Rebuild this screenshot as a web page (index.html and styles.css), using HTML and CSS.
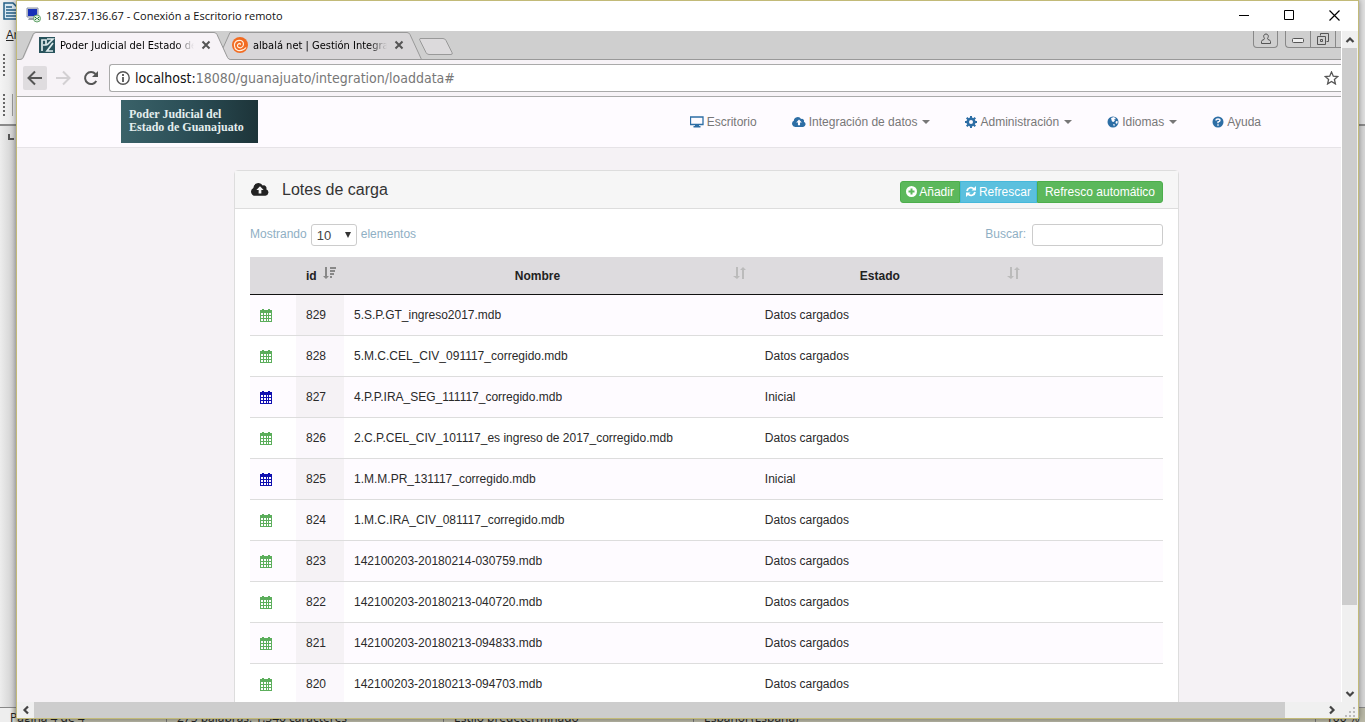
FILE: index.html
```html
<!DOCTYPE html>
<html lang="es">
<head>
<meta charset="utf-8">
<title>187.237.136.67 - Conexión a Escritorio remoto</title>
<link rel="stylesheet" href="styles.css">
</head>
<body>
<svg class="sprite" aria-hidden="true">
  <symbol id="cloud" viewBox="0 0 20 16"><path fill="currentColor" fill-rule="evenodd" d="M4.8 15A4.6 4.6 0 0 1 2.6 6.3 5.6 5.6 0 0 1 13 3.6a3.1 3.1 0 0 1 4 4.1A3.8 3.8 0 0 1 16 15zM8.5 12.5h3V8.6H14L10 4.5 6 8.6h2.500z"/></symbol>
  <symbol id="calendar" viewBox="0 0 12 13"><path fill="currentColor" fill-rule="evenodd" d="M0 1h2V0h2v1h4V0h2v1h2v12H0zM1 4v2h2V4zM4 4v2h2V4zM7 4v2h1V4zM9 4v2h2V4zM1 7v2h2V7zM4 7v2h2V7zM7 7v2h1V7zM9 7v2h2V7zM1 10v2h2v-2zM4 10v2h2v-2zM7 10v2h1v-2zM9 10v2h2v-2z"/></symbol>
  <symbol id="close" viewBox="0 0 10 10"><path d="M1.500 1.500l7 7M8.500 1.500l-7 7" stroke="#555" stroke-width="2" fill="none"/></symbol>
  <symbol id="sort" viewBox="0 0 14 14"><path fill="currentColor" d="M3 1h2v9h2l-3 3-4-3h3zM9 13h2V4h2l-3-3-3 3h2z"/></symbol>
  <symbol id="chevron" viewBox="0 0 10 10"><path d="M1.500 7L5 3.500 8.500 7" stroke="#444" stroke-width="2.200" fill="none"/></symbol>
</svg>

<div class="desktop">
  <div class="writer">
    <div class="writer-top">
      <svg class="writer-icon" width="14" height="18" viewBox="0 0 14 18"><path d="M1 1h9l5 5v11H1z" fill="#dceaf3" stroke="#245f86" stroke-width="1.500"/><path d="M3 5h6M3 8h11M3 11h11M3 14h11" stroke="#245f86" stroke-width="1.500"/></svg>
      <span class="writer-menu">Archivo</span>
      <span class="grip"></span>
      <span class="grip boxed"></span>
    </div>
    <div class="writer-page"><span class="tabmark"></span></div>
    <div class="writer-status">
      <span class="st-page">Página 4 de 4</span><span class="st-words">275 palabras, 1.346 caracteres</span><span class="st-style">Estilo predeterminado</span><span class="st-lang">Español (España)</span><span class="st-zoom">100 %</span>
    </div>
  </div>

  <div class="remote">
    <header class="titlebar">
      <svg width="15" height="16" viewBox="0 0 15 16"><path d="M1 1h11v9H1z" fill="#cfd4df" stroke="#8b92a5"/><path d="M2 2h9v7H2z" fill="#1730b8"/><path d="M3 11h5v2H2z" fill="#9ba0ab"/><circle cx="11" cy="11.500" r="3.500" fill="#dceedd" stroke="#66a46d"/><path d="M9 10l1.500 1.500L9 13M13 10l-1.500 1.500L13 13" stroke="#227733" fill="none"/></svg>
      <span class="title">187.237.136.67 - Conexión a Escritorio remoto</span>
      <button aria-label="Minimizar"><svg width="11" height="11"><path d="M0 5.500h10" stroke="#000"/></svg></button>
      <button aria-label="Maximizar"><svg width="11" height="11"><path d="M.5 .5h9v9h-9z" stroke="#000" fill="none"/></svg></button>
      <button aria-label="Cerrar"><svg width="11" height="11"><path d="M.5 .5l10 10M10.500 .5l-10 10" stroke="#000" stroke-width="1.200"/></svg></button>
    </header>

    <div class="browser">
      <div class="tabs">
        <svg class="tab-shapes" width="440" height="30" viewBox="0 0 440 30">
          <path d="M206 17L213 1.500h177q2 0 3 2L404.500 28.500H210z" fill="#d8d6d8" stroke="#999"/>
          <path d="M0 28.500h4q2 0 3-2L17 3.500q1-2 3-2h177q2 0 3 2l10.500 23q1 2 3 2V30H0z" fill="#f7f3f7"/>
          <path d="M0 1h18L5 28H0z" fill="#cfcfcf"/>
          <path d="M0 28.500h3q2 0 3-2L16 3.500q1-2 3-2h178q2 0 3 2l10.500 23q1 2 3 2H440" fill="none" stroke="#999"/>
          <path d="M403 7.500h23q2 0 3 2l6 12q1 2-1 2h-22q-2 0-3-2l-6-12q-1-2 0-2z" fill="#dcdadc" stroke="#999"/>
        </svg>
        <div class="tab">
          <svg width="16" height="16" viewBox="0 0 16 16"><path d="M0 0h16v16H0z" fill="#28535c"/><path d="M3 14V3h4v5H4M8 2h6L8 8M14 6l-6 8h6" stroke="#dfeced" stroke-width="1.700" fill="none"/></svg>
          <span class="tab-name">Poder Judicial del Estado de Guanajuato</span>
          <button aria-label="Cerrar pestaña"><svg width="10" height="10"><use href="#close"/></svg></button>
        </div>
        <div class="tab">
          <svg width="16" height="16" viewBox="0 0 16 16"><circle cx="8" cy="8" r="8" fill="#f26b21"/><path d="M8 8q1-2-1-1.500Q4.500 8 6 10q3 2 5-1 1.500-4-2-5.500Q4 2.500 2.500 7 2 12 6 13.500q5 1 8-3" stroke="#fff0df" stroke-width="1.200" fill="none"/></svg>
          <span class="tab-name">albalá net | Gestión Integral</span>
          <button aria-label="Cerrar pestaña"><svg width="10" height="10"><use href="#close"/></svg></button>
        </div>
        <div class="chrome-buttons">
          <button class="user" aria-label="Usuario"><svg width="12" height="12" viewBox="0 0 12 12"><path d="M6 1a2.300 2.300 0 0 1 2 3.500Q7 6 8 6.500q2.500.5 2.500 2V10.500h-9v-2q0-1.500 2.500-2Q5 6 4 4.500A2.300 2.300 0 0 1 6 1z" fill="none" stroke="#555"/></svg></button>
          <div class="win">
            <button aria-label="Minimizar navegador"><svg width="12" height="12"><rect x=".5" y="5.500" width="11" height="4" rx="1" fill="#eee" stroke="#555"/></svg></button>
            <button aria-label="Restaurar navegador"><svg width="14" height="14"><path d="M4.500 3.500v-2h8v8h-2M1.500 4.500h8v8h-8zM4.500 7.500h2v2h-2z" fill="none" stroke="#555"/></svg></button>
            <span class="win-end"></span>
          </div>
        </div>
      </div>
      <div class="toolbar">
        <button class="nav-btn active" aria-label="Atrás"><svg width="16" height="16"><path d="M15 8H2M8 1.500L1.500 8 8 14.500" stroke="#555" stroke-width="2" fill="none"/></svg></button>
        <button class="nav-btn" aria-label="Adelante"><svg width="16" height="16"><path d="M1 8h13M8 1.500L14.500 8 8 14.500" stroke="#d3d0d3" stroke-width="2" fill="none"/></svg></button>
        <button class="nav-btn" aria-label="Recargar"><svg width="16" height="16"><path d="M13.300 11A6 6 0 1 1 12.500 4" stroke="#555" stroke-width="2" fill="none"/><path d="M15 1v6H9z" fill="#555"/></svg></button>
        <div class="address">
          <svg width="14" height="14"><circle cx="7" cy="7" r="6.200" stroke="#555" stroke-width="1.400" fill="none"/><path d="M7 6v5M7 3v2" stroke="#555" stroke-width="1.800"/></svg>
          <span class="url"><b>localhost:</b>18080/guanajuato/integration/loaddata#</span>
          <svg width="15" height="14" viewBox="0 0 15 14"><path d="M7.500 1l1.800 4.200 4.500.3-3.400 3 1 4.400-3.900-2.400-3.900 2.400 1-4.400-3.400-3 4.500-.3z" stroke="#555" stroke-width="1.300" fill="none"/></svg>
        </div>
      </div>

      <div class="page">
        <nav class="navbar">
          <a class="logo" href="#">Poder Judicial del<br>Estado de Guanajuato</a>
          <div class="menu">
            <a href="#"><svg width="14" height="12"><path d="M.5 1h12.500v7.500H.5z" fill="none" stroke="#2d6ea5" stroke-width="1.300"/><path d="M5 8.500h4V10h1.500v1.500h-7V10H5z" fill="#2d6ea5"/></svg>Escritorio</a>
            <a href="#"><svg width="14" height="12"><use href="#cloud"/></svg>Integración de datos<i class="caret"></i></a>
            <a href="#"><svg width="12" height="12" viewBox="0 0 12 12"><circle cx="6" cy="6" r="3.300" fill="none" stroke="currentColor" stroke-width="2.600"/><path d="M6 0v2M6 10v2M0 6h2M10 6h2M1.700 1.700l1.600 1.600M8.700 8.700l1.600 1.600M1.700 10.300l1.600-1.600M8.700 3.300l1.600-1.600" stroke="currentColor" stroke-width="2"/></svg>Administración<i class="caret"></i></a>
            <a href="#"><svg width="12" height="12" viewBox="0 0 12 12"><circle cx="6" cy="6" r="5.500" fill="currentColor"/><path d="M4 2l3-1 2 2-2 .5 1 1L6.500 6 5 5.500 4.500 4zM9 5l2 .5-1 2.500-1.500-1zM6 8l2 .5-1 2z" fill="#fefbff"/></svg>Idiomas<i class="caret"></i></a>
            <a href="#"><svg width="12" height="12" viewBox="0 0 12 12"><circle cx="6" cy="6" r="5.500" fill="currentColor"/><path d="M4 4.500Q4 3 6 3t2 1.500Q8 5.500 6 6v1.200M6 8.200v1.500" stroke="#fefbff" stroke-width="1.400" fill="none"/></svg>Ayuda</a>
          </div>
        </nav>

        <main class="panel">
          <div class="panel-head">
            <svg width="18" height="15"><use href="#cloud"/></svg>
            <h1>Lotes de carga</h1>
            <div class="btn-group">
              <button class="green"><svg width="11" height="11" viewBox="0 0 11 11"><circle cx="5.500" cy="5.500" r="5.500" fill="#fff"/><path d="M5.500 2.500v6M2.500 5.500h6" stroke="#5cb85c" stroke-width="2"/></svg>Añadir</button>
              <button class="blue"><svg width="10" height="11" viewBox="0 0 10 11"><path d="M1 5A4 4 0 0 1 8 3M9 6A4 4 0 0 1 2 8" stroke="#fff" stroke-width="1.800" fill="none"/><path d="M10 0v4.500H5.500zM0 11V6.500h4.500z" fill="#fff"/></svg><span>Refrescar</span></button>
              <button class="green auto">Refresco automático</button>
            </div>
          </div>
          <div class="panel-body">
            <div class="filters">
              <label for="len">Mostrando</label>
              <span class="select-wrap"><select id="len"><option>10</option></select></span>
              <label for="len">elementos</label>
              <label class="search-label" for="search">Buscar:</label>
              <input id="search" type="search">
            </div>
            <table>
              <colgroup><col class="c-icon"><col class="c-id"><col class="c-name"><col class="c-state"><col></colgroup>
              <thead><tr>
                <th></th>
                <th class="s"><span>id</span><svg class="on" width="13" height="14"><path d="M2 1h2v9h2l-3 3-3-3h2zM7 1h6v2H7zM7 4h5v2H7zM7 7h4v2H7zM7 10h2v2H7z" fill="currentColor"/></svg></th>
                <th class="s"><span>Nombre</span><svg width="14" height="14"><use href="#sort"/></svg></th>
                <th class="s"><span>Estado</span><svg width="14" height="14"><use href="#sort"/></svg></th>
                <th></th>
              </tr></thead>
              <tbody>
                <tr><td><svg width="12" height="13"><use href="#calendar"/></svg></td><td>829</td><td>5.S.P.GT_ingreso2017.mdb</td><td>Datos cargados</td><td></td></tr>
                <tr><td><svg width="12" height="13"><use href="#calendar"/></svg></td><td>828</td><td>5.M.C.CEL_CIV_091117_corregido.mdb</td><td>Datos cargados</td><td></td></tr>
                <tr class="initial"><td><svg width="12" height="13"><use href="#calendar"/></svg></td><td>827</td><td>4.P.P.IRA_SEG_111117_corregido.mdb</td><td>Inicial</td><td></td></tr>
                <tr><td><svg width="12" height="13"><use href="#calendar"/></svg></td><td>826</td><td>2.C.P.CEL_CIV_101117_es ingreso de 2017_corregido.mdb</td><td>Datos cargados</td><td></td></tr>
                <tr class="initial"><td><svg width="12" height="13"><use href="#calendar"/></svg></td><td>825</td><td>1.M.M.PR_131117_corregido.mdb</td><td>Inicial</td><td></td></tr>
                <tr><td><svg width="12" height="13"><use href="#calendar"/></svg></td><td>824</td><td>1.M.C.IRA_CIV_081117_corregido.mdb</td><td>Datos cargados</td><td></td></tr>
                <tr><td><svg width="12" height="13"><use href="#calendar"/></svg></td><td>823</td><td>142100203-20180214-030759.mdb</td><td>Datos cargados</td><td></td></tr>
                <tr><td><svg width="12" height="13"><use href="#calendar"/></svg></td><td>822</td><td>142100203-20180213-040720.mdb</td><td>Datos cargados</td><td></td></tr>
                <tr><td><svg width="12" height="13"><use href="#calendar"/></svg></td><td>821</td><td>142100203-20180213-094833.mdb</td><td>Datos cargados</td><td></td></tr>
                <tr><td><svg width="12" height="13"><use href="#calendar"/></svg></td><td>820</td><td>142100203-20180213-094703.mdb</td><td>Datos cargados</td><td></td></tr>
              </tbody>
            </table>
          </div>
        </main>
      </div>
    </div>

    <div class="vscroll">
      <button aria-label="Arriba"><svg width="10" height="10"><use href="#chevron"/></svg></button>
      <div class="vthumb"></div><div class="vspace"></div>
      <button class="down" aria-label="Abajo"><svg width="10" height="10"><use href="#chevron"/></svg></button>
    </div>
    <div class="hscroll">
      <button class="left" aria-label="Izquierda"><svg width="10" height="10"><use href="#chevron"/></svg></button>
      <div class="hthumb"></div><div class="hspace"></div>
      <button class="right" aria-label="Derecha"><svg width="10" height="10"><use href="#chevron"/></svg></button>
      <svg class="resize" width="10" height="10"><path d="M8 0h2v2H8zM4 4h2v2H4zM8 4h2v2H8zM0 8h2v2H0zM4 8h2v2H4zM8 8h2v2H8z" fill="#bbb"/></svg>
    </div>
  </div>
</div>
</body>
</html>
```
FILE: styles.css
```css
* { box-sizing: border-box; }
body { margin: 0; font-family: "Liberation Sans", Arial, sans-serif; font-size: 13px; color: #222; }
button { border: 0; padding: 0; margin: 0; background: none; font: inherit; color: inherit; display: flex; align-items: center; justify-content: center; }
a { color: inherit; text-decoration: none; }
svg { flex: none; display: block; }
.sprite { position: absolute; width: 0; height: 0; }

.desktop { position: relative; height: 100vh; overflow: hidden; }

/* Document editor behind the remote window */
.writer { position: absolute; inset: 0; display: flex; flex-direction: column; background: #dedede; font-family: "Open Sans", "Noto Sans", sans-serif; font-size: 12px; }
.writer-top { height: 126px; padding: 2px 0 0 3px; border-bottom: 2px solid #8a8a8a; background: linear-gradient(90deg, #f4f4f4, #e0e0e0 18px); display: flex; flex-direction: column; align-items: flex-start; }
.writer-menu { margin: 6px 0 0 3px; line-height: 18px; }
.writer-menu::first-letter { text-decoration: underline; }
.grip { width: 12px; height: 22px; margin-top: 10px; border-left: 2px dotted #666; }
.grip.boxed { margin-top: 18px; width: 10px; border-right: 1px solid #999; }
.writer-page { flex: 1; padding: 8px; background: linear-gradient(90deg, #ededed, #c9c9c9 17px, #d6d6d6); }
.tabmark { display: block; width: 6px; height: 6px; border: solid #555; border-width: 0 0 2px 2px; }
.writer-status { height: 15px; border-top: 1px solid #888; background: linear-gradient(90deg, #eee 10px, #b9b8a6 17px); display: flex; white-space: nowrap; line-height: 20px; padding-left: 10px; overflow: hidden; }
.writer-status span { padding-left: 10px; border-left: 1px solid #777; }
.writer-status .st-page { width: 156px; padding: 0; border: 0; }
.st-words { width: 277px; }
.st-style { width: 212px; }
.st-lang { flex: 1; margin-left: 38px; }
.st-zoom { width: 50px; }

/* Remote desktop window */
.remote { position: absolute; inset: 0 6px 3px 16px; display: grid; grid-template-columns: minmax(0, 1fr) 16px; grid-template-rows: 30px minmax(0, 1fr) 16px; background: #f0f0f0; border: 1px solid #c2ba78; box-shadow: 0 0 6px rgba(0, 0, 0, .4); }
.titlebar { grid-column: 1 / 3; background: #fff; display: flex; align-items: center; padding: 0 18px 2px 9px; gap: 34px; font-family: "Open Sans", "Noto Sans", sans-serif; font-size: 11px; color: #111; }
.title { flex: 1; margin-left: -29px; }
.browser { display: flex; flex-direction: column; overflow: hidden; background: #f7f3f7; border-right: 1px solid #fff; }

.tabs { position: relative; height: 29px; flex: none; display: flex; padding-left: 22px; background: #cfcfcf; border-bottom: 1px solid #999; font-family: "DejaVu Sans Condensed", sans-serif; font-size: 11px; color: #000; }
.tab-shapes { position: absolute; left: 0; top: 0; }
.tab { position: relative; width: 193px; display: flex; align-items: center; }
.tab-name { width: 134px; margin: 0 7px 0 5px; overflow: hidden; white-space: nowrap; -webkit-mask-image: linear-gradient(90deg, #000 116px, transparent); mask-image: linear-gradient(90deg, #000 116px, transparent); }
.chrome-buttons { margin-left: auto; display: flex; gap: 7px; height: 17px; }
.user { width: 25px; border: 1px solid #888; border-top: 0; border-radius: 0 0 4px 4px; }
.win { display: flex; border: 1px solid #888; border-width: 0 0 1px 1px; border-radius: 0 0 0 4px; }
.win button { width: 25px; border-right: 1px solid #888; }
.win-end { width: 5px; }

.toolbar { height: 37px; flex: none; display: flex; align-items: center; gap: 4px; padding-left: 6px; border-bottom: 1px solid #aaa; }
.nav-btn { width: 24px; height: 24px; border-radius: 2px; }
.nav-btn.active { background: #dfdcdf; }
.address { flex: 1; height: 28px; margin-left: 2px; padding: 0 2px 0 6px; display: flex; align-items: center; gap: 5px; background: #fff; border: 1px solid #aaa; border-right: 0; border-radius: 3px 0 0 3px; font-family: "DejaVu Sans Condensed", sans-serif; font-size: 14px; color: #777; }
.url { flex: 1; }
.url b { font-weight: 400; color: #111; }

/* Web application */
.page { flex: 1; overflow: hidden; background: #f5f2f5; }
.navbar { height: 51px; padding: 0 80px 2px 104px; display: flex; align-items: center; justify-content: space-between; background: #fefbff; border-bottom: 1px solid #e6e3e7; }
.logo { width: 137px; height: 43px; padding: 8px 0 0 8px; background: linear-gradient(90deg, #3a6269, #2b4e56 50%, #1d3439); color: #e4eeee; font: bold 12px/13px "Liberation Serif", serif; white-space: nowrap; }
.menu { display: flex; gap: 35px; padding-top: 2px; font-size: 12px; color: #777; }
.menu a { display: flex; align-items: center; gap: 3px; }
.menu svg { color: #2d6ea5; }
.caret { margin-left: 2px; border: 4px solid transparent; border-top-color: #777; border-bottom: 0; }

.panel { margin: 22px 162px 0 217px; background: #fff; border: 1px solid #ddd; border-radius: 4px; }
.panel-head { height: 38px; padding: 0 15px 0 16px; display: flex; align-items: center; background: #f6f6f6; border-bottom: 1px solid #ddd; }
h1 { margin: 0 auto 0 13px; font-size: 16px; font-weight: 400; color: #333; }
.btn-group { display: flex; margin-top: 4px; font-size: 12px; color: #fff; }
.btn-group button { height: 22px; padding: 0 5px; gap: 2px; border: 1px solid #4cae4c; background: #5cb85c; }
.btn-group .blue { background: #5bc0de; border-color: #46b8da; gap: 3px; }
.btn-group .auto { padding: 0 7px; }
.btn-group button:first-child { border-radius: 3px 0 0 3px; }
.btn-group button:last-child { border-radius: 0 3px 3px 0; }
.panel-body { padding: 15px; }
.filters { height: 22px; margin-bottom: 11px; display: flex; align-items: center; gap: 4px; font-size: 12px; color: #8fafc4; }
.filters label { line-height: 20px; padding-bottom: 2px; }
.select-wrap { position: relative; display: flex; }
.select-wrap::after { content: ""; position: absolute; right: 6px; top: 8px; border: 3px solid transparent; border-top: 6px solid #333; border-bottom: 0; }
select { appearance: none; width: 46px; height: 22px; padding: 0 5px; border: 1px solid #ccc; border-radius: 3px; background: #fff; color: #444; font: 13px "Liberation Sans", Arial, sans-serif; }
.search-label { margin-left: auto; }
input { appearance: none; width: 131px; height: 22px; margin: 0 0 0 2px; border: 1px solid #ccc; border-radius: 3px; background: #fff; }
table { width: 100%; table-layout: fixed; border-collapse: separate; border-spacing: 0; }
.c-icon { width: 46px; }
.c-id { width: 48px; }
.c-name { width: 45%; }
.c-state { width: 30%; }
th { position: relative; height: 38px; padding: 0 34px 0 10px; background: #dddbde; border-bottom: 1px solid #111; font-size: 12px; }
th svg { position: absolute; right: 8px; top: 9px; color: #bbb; }
th .on { color: #888; }
td { height: 41px; padding: 0 10px; border-bottom: 1px solid #ddd; white-space: nowrap; font-size: 12px; color: #2a2a2a; }
td svg { color: #5cae5c; }
.initial svg { color: #1010b0; }
tr:nth-child(odd) td { background: #fefbff; }
td:nth-child(2) { background: #fbf8fc; }
tr:nth-child(odd) td:nth-child(2) { background: #f5f2f5; }

/* Scroll bars of the remote window */
.vscroll { display: flex; flex-direction: column; }
.vscroll button { height: 17px; }
.vthumb { flex: 557; background: #cdcdcd; margin-right: 1px; }
.vspace { flex: 80; }
.down svg { transform: rotate(180deg); }
.left svg { transform: rotate(-90deg); }
.right svg { transform: rotate(90deg); }
.hscroll { grid-column: 1 / 3; display: flex; align-items: stretch; }
.hscroll button { width: 17px; }
.hthumb { flex: 1252; background: #cdcdcd; }
.hspace { flex: 38; }
.resize { align-self: flex-end; margin: 0 3px 1px 5px; }
```
